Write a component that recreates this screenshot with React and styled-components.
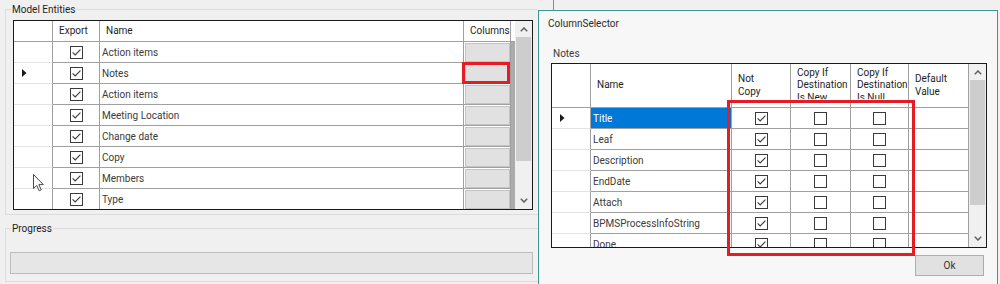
import styled, { createGlobalStyle } from "styled-components";

const GlobalStyle = createGlobalStyle`
  html, body {
    margin: 0;
    padding: 0;
  }
  body {
    background: #f0f0f0;
    font-family: Roboto, "Noto Sans", sans-serif;
    font-size: 10px;
    color: #333;
  }
`

const Desktop = styled.div`
  width: 1000px;
  height: 284px;
  display: flex;
  overflow: hidden;
  background: #f0f0f0;
`

const MainForm = styled.div`
  position: relative;
  width: 538px;
  flex: none;
  overflow: hidden;
  padding: 2px 0 0 5px;
  box-sizing: border-box;
`

const GroupBox = styled.fieldset`
  width: 560px;
  margin: 0 0 ${p => p.$gap || 0}px 0;
  padding: ${p => p.$pad};
  border: 1px solid #dcdcdc;
  box-sizing: border-box;
  min-width: 0;
`

const GroupTitle = styled.legend`
  padding: 0 1px;
  margin-left: ${p => p.$shift}px;
  line-height: 15px;
  color: #1e1e1e;
`

const ProgressBar = styled.div`
  width: 523px;
  height: 22px;
  box-sizing: border-box;
  background: #e6e6e6;
  border: 1px solid #bcbcbc;
`

const GridFrame = styled.div`
  width: ${p => p.$w}px;
  height: ${p => p.$h}px;
  box-sizing: border-box;
  border: 1px solid #1a1a1a;
  display: flex;
  overflow: hidden;
  background: #ababab;
`

const Table = styled.div`
  flex: 1;
  display: grid;
  grid-template-columns: ${p => p.$cols};
  grid-template-rows: ${p => p.$head}px;
  grid-auto-rows: 21px;
  align-content: start;
`

const HeadCell = styled.div`
  background: #fff;
  border-right: 1px solid #a0a0a0;
  border-bottom: 1px solid #a0a0a0;
  box-sizing: border-box;
  display: flex;
  align-items: center;
  padding: 0 2px 0 6px;
  color: #1e1e1e;
  line-height: 12.5px;
  white-space: nowrap;
  overflow: hidden;
`

const HeadText = styled.span`
  clip-path: ${p => (p.$clip ? "inset(0 0 5px 0)" : "none")};
`

const Filler = styled.div`
  background: ${p => (p.$head ? "#fff" : "transparent")};
  border-bottom: ${p => (p.$head ? "1px solid #a0a0a0" : "none")};
  box-sizing: border-box;
`

const RowHead = styled.div`
  background: #fff;
  border-right: 1px solid #a0a0a0;
  border-bottom: 1px solid #e3e3e3;
  box-sizing: border-box;
  display: flex;
  align-items: center;
  padding-left: 8px;
`

const Cell = styled.div`
  position: relative;
  background: ${p => (p.$selected ? "#0078d7" : "#fff")};
  color: ${p => (p.$selected ? "#fff" : "#3b3b3b")};
  border-right: 1px solid #a0a0a0;
  border-bottom: 1px solid #a0a0a0;
  box-sizing: border-box;
  display: flex;
  align-items: center;
  justify-content: ${p => (p.$center ? "center" : "flex-start")};
  padding: ${p => (p.$center ? "0" : "0 0 0 2px")};
  white-space: nowrap;
  overflow: ${p => (p.$marked ? "visible" : "hidden")};

  ${p => p.$marked && `
    &::after {
      content: "";
      position: absolute;
      left: -2px;
      top: -1px;
      right: 0;
      bottom: -1px;
      border: 3px solid #e41c24;
      z-index: 2;
    }
  `}
`

const ButtonCell = styled(Cell)`
  padding: 1px 0 0 1px;
  align-items: stretch;
`

const CellButton = styled.div`
  flex: 1;
  background: #e1e1e1;
  border: 1px solid #c4c4c4;
`

const ScrollBar = styled.div`
  width: 17px;
  flex: none;
  display: flex;
  flex-direction: column;
  background: #f0f0f0;
`

const ScrollArrow = styled.div`
  height: 17px;
  flex: none;
  display: flex;
  align-items: center;
  justify-content: center;
`

const ScrollThumb = styled.div`
  height: ${p => p.$h}px;
  margin: 0 1px;
  background: #cdcdcd;
`

const Cursor = styled.svg`
  position: absolute;
  left: 33px;
  top: 174px;
`

const RightArea = styled.div`
  flex: 1;
  display: flex;
  flex-direction: column;
`

const TopStrip = styled.div`
  height: 10px;
  flex: none;
  padding-left: 15px;
`

const Tick = styled.div`
  width: 1px;
  height: 10px;
  background: #8a8a8a;
`

const Dialog = styled.div`
  position: relative;
  width: 460px;
  flex: 1;
  box-sizing: border-box;
  border: 1px solid #3d9a91;
  border-bottom: none;
  background: #f7f7f7;
  padding-top: 5px;
`

const DialogTitle = styled.div`
  padding-left: 9px;
  line-height: 15px;
  color: #2b2b2b;
`

const DialogBody = styled.div`
  padding-left: 12px;
`

const SectionLabel = styled.div`
  margin-top: 15px;
  padding-left: 2px;
  line-height: 15px;
  color: #3b3b3b;
`

const GridSpace = styled.div`
  margin-top: 2px;
`

const Footer = styled.div`
  width: 436px;
  margin-top: 7px;
  padding-right: 3px;
  box-sizing: border-box;
  display: flex;
  justify-content: flex-end;
`

const OkButton = styled.button`
  width: 69px;
  height: 21px;
  box-sizing: border-box;
  background: #e1e1e1;
  border: 1px solid #adadad;
  border-radius: 0;
  font-family: inherit;
  font-size: 10px;
  color: #333;
  padding: 0;
`

const Annotation = styled.div`
  position: absolute;
  left: 188px;
  top: 89px;
  width: 188px;
  height: 156px;
  box-sizing: border-box;
  border: 3px solid #e41c24;
  pointer-events: none;
`

const Check = ({ checked }) => (
  <svg width="13" height="13" viewBox="0 0 13 13">
    <rect x="0.5" y="0.5" width="12" height="12" fill="#fff" stroke="#3a3a3a" />
    {checked && (
      <path d="M2.6 6.4 L5.2 9 L10.4 3.6" fill="none" stroke="#3a3a3a" strokeWidth="1.1" />
    )}
  </svg>
)

const Pointer = () => (
  <svg width="5" height="8" viewBox="0 0 5 8">
    <path d="M0 0 L4.5 4 L0 8 Z" fill="#1a1a1a" />
  </svg>
)

const Chevron = ({ down }) => (
  <svg width="8" height="5" viewBox="0 0 8 5">
    <path
      d={down ? "M0.8 0.8 L4 4 L7.2 0.8" : "M0.8 4.2 L4 1 L7.2 4.2"}
      fill="none"
      stroke="#606060"
      strokeWidth="1.5"
    />
  </svg>
)

const Scroller = ({ before, thumb }) => (
  <ScrollBar>
    <ScrollArrow style={{ height: before }}>
      <Chevron />
    </ScrollArrow>
    <ScrollThumb $h={thumb} />
    <div style={{ flex: 1 }} />
    <ScrollArrow>
      <Chevron down />
    </ScrollArrow>
  </ScrollBar>
)

const entities = [
  "Action items",
  "Notes",
  "Action items",
  "Meeting Location",
  "Change date",
  "Copy",
  "Members",
  "Type",
]

const fields = [
  "Title",
  "Leaf",
  "Description",
  "EndDate",
  "Attach",
  "BPMSProcessInfoString",
  "Done",
]

function App() {
  return (
    <>
      <GlobalStyle />
      <Desktop>
        <MainForm>
          <GroupBox $pad="3px 0 4px 7px" $gap={6}>
            <GroupTitle $shift={-2}>Model Entities</GroupTitle>
            <GridFrame $w={520} $h={190}>
              <Table $cols="39px 47px 364px 47px 1fr" $head={21}>
                <HeadCell />
                <HeadCell>Export</HeadCell>
                <HeadCell>Name</HeadCell>
                <HeadCell>Columns</HeadCell>
                <Filler $head />
                {entities.map((name, i) => [
                  <RowHead key={`h${i}`}>{i === 1 && <Pointer />}</RowHead>,
                  <Cell key={`e${i}`} $center>
                    <Check checked />
                  </Cell>,
                  <Cell key={`n${i}`}>{name}</Cell>,
                  <ButtonCell key={`c${i}`} $marked={i === 1}>
                    <CellButton />
                  </ButtonCell>,
                  <Filler key={`f${i}`} />,
                ])}
              </Table>
              <Scroller before={16} thumb={124} />
            </GridFrame>
          </GroupBox>
          <GroupBox $pad="16px 0 7px 4px">
            <GroupTitle $shift={1}>Progress</GroupTitle>
            <ProgressBar />
          </GroupBox>
          <Cursor width="12" height="18" viewBox="0 0 12 18">
            <path
              d="M0.5 0.5 L0.5 14.5 L3.8 11.4 L6.2 16.8 L8.2 15.9 L5.9 10.6 L10.3 10.6 Z"
              fill="#fff"
              stroke="#4a4a4a"
              strokeWidth="1"
              strokeLinejoin="round"
            />
          </Cursor>
        </MainForm>
        <RightArea>
          <TopStrip>
            <Tick />
          </TopStrip>
          <Dialog>
            <DialogTitle>ColumnSelector</DialogTitle>
            <DialogBody>
              <SectionLabel>Notes</SectionLabel>
              <GridSpace>
                <GridFrame $w={436} $h={185}>
                  <Table $cols="39px 141px 59px 60px 58px 60px" $head={44}>
                    <HeadCell />
                    <HeadCell>Name</HeadCell>
                    <HeadCell>
                      <HeadText>
                        Not
                        <br />
                        Copy
                      </HeadText>
                    </HeadCell>
                    <HeadCell>
                      <HeadText $clip>
                        Copy If
                        <br />
                        Destination
                        <br />
                        Is New
                      </HeadText>
                    </HeadCell>
                    <HeadCell>
                      <HeadText $clip>
                        Copy If
                        <br />
                        Destination
                        <br />
                        Is Null
                      </HeadText>
                    </HeadCell>
                    <HeadCell>
                      <HeadText>
                        Default
                        <br />
                        Value
                      </HeadText>
                    </HeadCell>
                    {fields.map((name, i) => [
                      <RowHead key={`h${i}`}>{i === 0 && <Pointer />}</RowHead>,
                      <Cell key={`n${i}`} $selected={i === 0}>
                        {name}
                      </Cell>,
                      <Cell key={`a${i}`} $center>
                        <Check checked />
                      </Cell>,
                      <Cell key={`b${i}`} $center>
                        <Check />
                      </Cell>,
                      <Cell key={`c${i}`} $center>
                        <Check />
                      </Cell>,
                      <Cell key={`d${i}`} />,
                    ])}
                  </Table>
                  <Scroller before={16} thumb={125} />
                </GridFrame>
              </GridSpace>
              <Footer>
                <OkButton>Ok</OkButton>
              </Footer>
            </DialogBody>
            <Annotation />
          </Dialog>
        </RightArea>
      </Desktop>
    </>
  )
}

export default App
